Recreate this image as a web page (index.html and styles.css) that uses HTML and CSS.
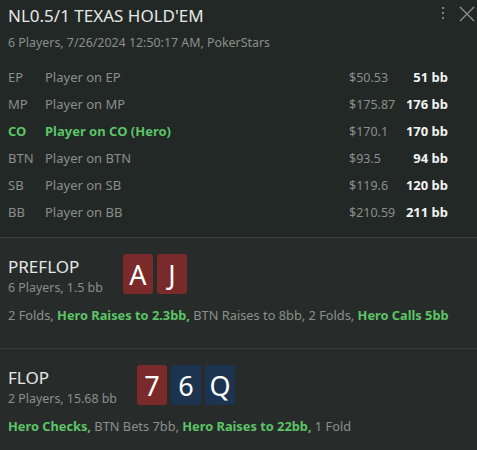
FILE: index.html
```html
<!DOCTYPE html>
<html lang="en">
<head>
  <meta charset="UTF-8" />
  <meta name="viewport" content="width=device-width, initial-scale=1" />
  <title>Hand History</title>
  <link rel="stylesheet" href="styles.css">
</head>
<body>
  <div class="hand">
    <div class="header">
      <div class="top">
        <h1>NL0.5/1 TEXAS HOLD'EM</h1>
        <div class="tools">
          <svg class="dots" width="4" height="14" viewBox="0 0 4 14">
            <rect x="1" y="1" width="2" height="2" fill="#7d8380"/>
            <rect x="1" y="6" width="2" height="2" fill="#7d8380"/>
            <rect x="1" y="11" width="2" height="2" fill="#7d8380"/>
          </svg>
          <svg class="close" width="16" height="16" viewBox="0 0 16 16">
            <path d="M1 1 L15 15 M15 1 L1 15" stroke="#8a8f8c" stroke-width="1.4" fill="none"/>
          </svg>
        </div>
      </div>
      <div class="meta">6 Players, 7/26/2024 12:50:17 AM, PokerStars</div>

      <div class="players">
        <div class="row"><span class="pos">EP</span><span class="name">Player on EP</span><span class="cash">$50.53</span><span class="bb">51 bb</span></div>
        <div class="row"><span class="pos">MP</span><span class="name">Player on MP</span><span class="cash">$175.87</span><span class="bb">176 bb</span></div>
        <div class="row hero"><span class="pos">CO</span><span class="name">Player on CO (Hero)</span><span class="cash">$170.1</span><span class="bb">170 bb</span></div>
        <div class="row"><span class="pos">BTN</span><span class="name">Player on BTN</span><span class="cash">$93.5</span><span class="bb">94 bb</span></div>
        <div class="row"><span class="pos">SB</span><span class="name">Player on SB</span><span class="cash">$119.6</span><span class="bb">120 bb</span></div>
        <div class="row"><span class="pos">BB</span><span class="name">Player on BB</span><span class="cash">$210.59</span><span class="bb">211 bb</span></div>
      </div>
    </div>

    <div class="street">
      <div class="street-head">
        <div class="street-info">
          <h2>PREFLOP</h2>
          <div class="meta">6 Players, 1.5 bb</div>
        </div>
        <div class="cards">
          <span class="card red">A</span>
          <span class="card red">J</span>
        </div>
      </div>
      <div class="actions">2 Folds, <b>Hero Raises to 2.3bb,</b> BTN Raises to 8bb, 2 Folds, <b>Hero Calls 5bb</b></div>
    </div>

    <div class="street">
      <div class="street-head">
        <div class="street-info">
          <h2>FLOP</h2>
          <div class="meta">2 Players, 15.68 bb</div>
        </div>
        <div class="cards">
          <span class="card red">7</span>
          <span class="card blue">6</span>
          <span class="card blue">Q</span>
        </div>
      </div>
      <div class="actions"><b>Hero Checks,</b> BTN Bets 7bb, <b>Hero Raises to 22bb,</b> 1 Fold</div>
    </div>
  </div>
</body>
</html>
```

FILE: styles.css
```css
body {
  margin: 0;
  background: #272c2b;
  font-family: "Noto Sans", "Open Sans", sans-serif;
  color: #8a8f8c;
  font-size: 13px;
}
.header {
  background: #222826;
  padding: 4px 0 11px 8px;
  border-bottom: 1px solid #3a3f3d;
}
.top {
  display: flex;
  justify-content: space-between;
  align-items: flex-start;
}
h1 {
  margin: 0;
  font-size: 17px;
  font-weight: normal;
  color: #e6e8e7;
  line-height: 24px;
}
.tools {
  display: flex;
  gap: 14px;
  padding-top: 2px;
  padding-right: 2px;
}
.meta {
  font-size: 12.4px;
  line-height: 18px;
  margin-top: 6px;
}
.players {
  margin-top: 12px;
  padding-right: 29px;
}
.row {
  display: grid;
  grid-template-columns: 37px 1fr 56px 43px;
  line-height: 27px;
}
.cash {
  font-size: 12.5px;
}
.bb {
  text-align: right;
  color: #f2f3f2;
  font-weight: bold;
}
.hero .pos, .hero .name {
  color: #5cc466;
  font-weight: bold;
}
.street {
  padding: 16px 8px 24px;
  border-bottom: 1px solid #3a3f3d;
}
.street-head {
  display: flex;
  align-items: flex-start;
  gap: 20px;
}
h2 {
  margin: 1px 0 0;
  font-size: 17px;
  font-weight: normal;
  color: #e6e8e7;
  line-height: 24px;
}
.street-info .meta {
  margin-top: 0;
}
.cards {
  display: flex;
  gap: 4px;
}
.card {
  width: 30px;
  height: 40px;
  border-radius: 3px;
  color: #fff;
  font-size: 27px;
  display: flex;
  align-items: center;
  justify-content: center;
}
.red {
  background: #7a2a2a;
}
.blue {
  background: #1d3450;
}
.actions {
  margin-top: 9px;
  font-size: 12.8px;
  line-height: 18px;
}
.actions b {
  color: #5cc466;
}
```
